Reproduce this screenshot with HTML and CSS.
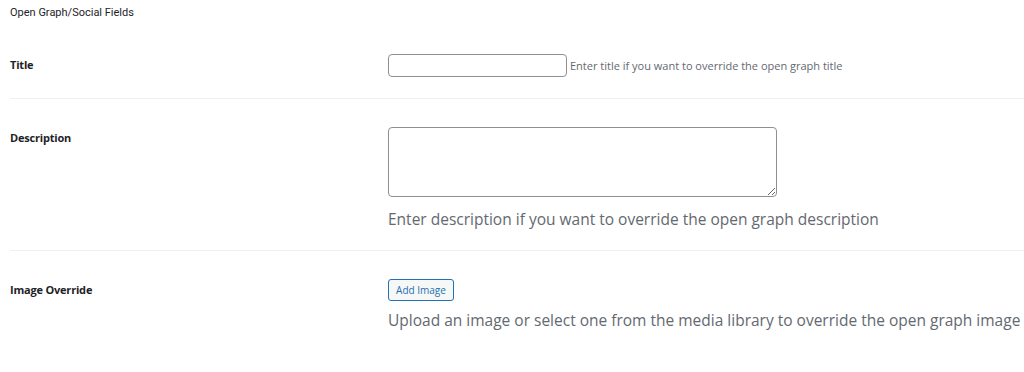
FILE: index.html
```html
<!DOCTYPE html>
<html lang="en">
<head>
	<meta charset="utf-8">
	<meta name="viewport" content="width=device-width,initial-scale=1" />
	<title>Open Graph/Social Fields</title>
	<link rel="stylesheet" href="styles.css">
</head>
<body>

	<h2 class="section-title">Open Graph/Social Fields</h2>

	<div class="form-table">
		<div class="form-row">
			<label class="row-label" for="og_title">Title</label>
			<div class="row-field inline-field">
				<input id="og_title" class="text-input" type="text" name="og_title">
				<span class="hint-inline">Enter title if you want to override the open graph title</span>
			</div>
		</div>

		<div class="form-row">
			<label class="row-label" for="og_description">Description</label>
			<div class="row-field">
				<textarea id="og_description" class="text-area" name="og_description"></textarea>
				<p class="hint">Enter description if you want to override the open graph description</p>
			</div>
		</div>

		<div class="form-row last">
			<label class="row-label">Image Override</label>
			<div class="row-field">
				<button class="btn-secondary" type="button">Add Image</button>
				<p class="hint">Upload an image or select one from the media library to override the open graph image</p>
			</div>
		</div>
	</div>

</body>
</html>
```

FILE: styles.css
```css
	body {
		margin: 0;
		padding: 0 0 0 10px;
		background: #ffffff;
		color: #1d2327;
		font-family: "Open Sans", sans-serif;
	}

	.section-title {
		margin: 0;
		padding: 5px 0 5px 0;
		font-family: Roboto, sans-serif;
		font-size: 11px;
		font-weight: normal;
		line-height: 16px;
		color: #1d2327;
	}

	.form-row {
		display: grid;
		grid-template-columns: 378px 1fr;
		padding: 28px 0 20px 0;
		border-bottom: 1px solid #f0f0f0;
	}
	.form-row.last {
		border-bottom: 0;
	}

	.row-label {
		padding-top: 3px;
		font-size: 11px;
		font-weight: bold;
		letter-spacing: -0.2px;
		line-height: 16px;
	}

	.row-field {
		display: flex;
		flex-direction: column;
		align-items: flex-start;
	}

	.inline-field {
		flex-direction: row;
		align-items: center;
		padding-bottom: 1px;
	}

	.text-input {
		box-sizing: border-box;
		width: 179px;
		height: 23px;
		margin: 0;
		border: 1px solid #8c8f94;
		border-radius: 4px;
		background: #fff;
	}

	.hint-inline {
		margin-left: 3px;
		font-size: 11px;
		color: #646970;
	}

	.text-area {
		box-sizing: border-box;
		width: 389px;
		height: 70px;
		margin: 0 0 3px 0;
		border: 1px solid #8c8f94;
		border-radius: 4px;
		background: #fff;
	}

	.hint {
		margin: 8px 0 0 0;
		font-size: 15.5px;
		line-height: 22px;
		color: #646970;
	}

	.btn-secondary {
		box-sizing: border-box;
		height: 22px;
		width: 66px;
		padding: 0;
		border: 1px solid #2271b1;
		border-radius: 3px;
		background: #f6f7f7;
		color: #2271b1;
		font-family: "Open Sans", sans-serif;
		font-size: 10px;
		cursor: pointer;
	}

	.btn-secondary:hover {
		background: #f0f0f1;
		color: #0a4b78;
	}
```
